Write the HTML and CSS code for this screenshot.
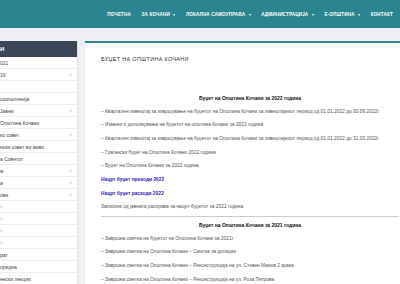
FILE: index.html
```html
<!DOCTYPE html>
<html lang="mk">
<head>
    <meta charset="UTF-8" />
    <meta name="viewport" content="width=device-width, initial-scale=1.0"/>
    <title>Буџет на Општина Кочани</title>
    <link rel="stylesheet" href="styles.css">
</head>
<body>
<header class="topbar">
    <nav class="menu">
        <a href="#">ПОЧЕТНА</a>
        <a href="#">ЗА КОЧАНИ <span class="caret">▾</span></a>
        <a href="#">ЛОКАЛНА САМОУПРАВА <span class="caret">▾</span></a>
        <a href="#">АДМИНИСТРАЦИЈА <span class="caret">▾</span></a>
        <a href="#">Е-ОПШТИНА <span class="caret">▾</span></a>
        <a href="#">КОНТАКТ</a>
    </nav>
</header>

<div class="page">
    <aside class="sidebar">
        <div class="side-head">И</div>
        <ul class="side-list">
            <li>021</li>
            <li>19 <span class="chev">˅</span></li>
            <li></li>
            <li>соопштенија</li>
            <li>Јавни <span class="chev">˅</span></li>
            <li>Општина Кочани</li>
            <li>ко совет <span class="chev">˅</span></li>
            <li>нски совет во живо</li>
            <li>а Советот</li>
            <li>м <span class="chev">˅</span></li>
            <li>а <span class="chev">˅</span></li>
            <li>ове <span class="chev">˅</span></li>
            <li><span class="chev">˅</span></li>
            <li><span class="chev">˅</span></li>
            <li><span class="chev">˅</span></li>
            <li><span class="chev">˅</span></li>
            <li>рат</li>
            <li>оредна</li>
            <li>нески лекции</li>
        </ul>
    </aside>

    <main class="content">
        <h1>БУЏЕТ НА ОПШТИНА КОЧАНИ</h1>

        <h3>Буџет на Општина Кочани за 2022 година</h3>
        <p>– Квартален извештај за извршување на буџетот на Општина Кочани за извештајниот период од 01.01.2022 до 30.06.2022г</p>
        <p>– Измени и дополнувања на буџетот на општина Кочани за 2022 година</p>
        <p>– Квартален извештај за извршување на буџетот на Општина Кочани за извештајниот период од 01.01.2022 до 31.03.2022г</p>
        <p>– Граѓански буџет на Општина Кочани 2022 година</p>
        <p>– Буџет на Општина Кочани за 2022 година</p>
        <p><a href="#">Нацрт буџет приходи 2022</a></p>
        <p><a href="#">Нацрт буџет расходи 2022</a></p>
        <p>Записник од јавната расправа за нацрт-буџетот за 2022 година</p>
        <hr>
        <h3>Буџет на Општина Кочани за 2021 година</h3>
        <p>– Завршна сметка на буџетот на Општина Кочани за 2021г</p>
        <p>– Завршна сметка на Општина Кочани – Сметка за дотации</p>
        <p>– Завршна сметка на Општина Кочани – Реконструкција на ул. Стевен Манов 2 крака</p>
        <p>– Завршна сметка на Општина Кочани – Реконструкција на ул. Роза Петрова</p>
    </main>
</div>
</body>
</html>
```

FILE: styles.css
```css
body {
    margin: 0;
    font-family: "Liberation Sans", Arial, sans-serif;
    background: #eef0f5;
    overflow: hidden;
}
.topbar {
    background: #2b8591;
    height: 28px;
    display: flex;
    align-items: center;
    justify-content: flex-end;
}
.menu {
    display: flex;
    gap: 10.5px;
    padding-right: 7px;
}
.menu a {
    color: white;
    text-decoration: none;
    font-size: 4.6px;
    font-weight: bold;
    letter-spacing: 0.15px;
}
.caret {
    font-size: 4px;
    opacity: 0.8;
    margin-left: 2px;
}
.page {
    display: flex;
    gap: 7px;
    padding-top: 13px;
}
.sidebar {
    width: 77px;
    flex: none;
    background: white;
    border-right: 1px solid #dfe2e8;
}
.side-head {
    background: #3b4659;
    color: white;
    font-size: 6px;
    font-weight: bold;
    height: 16px;
    line-height: 16px;
}
.side-list {
    list-style: none;
    margin: 0;
    padding: 0;
}
.side-list li {
    height: 11px;
    line-height: 13px;
    border-bottom: 1px solid #eceef2;
    font-size: 5px;
    color: #444;
    display: flex;
    justify-content: space-between;
    padding-right: 5px;
}
.chev {
    color: #aaa;
    font-size: 5px;
}
.content {
    width: 298px;
    flex: none;
    background: white;
    border-top: 2px solid #2b8591;
    padding: 13px 16px 0 16px;
    color: #555;
    font-size: 4.85px;
}
.content h1 {
    font-size: 5.5px;
    font-weight: normal;
    color: #333;
    letter-spacing: 0.3px;
    margin: 0 0 33px 0;
}
.content h3 {
    text-align: center;
    font-size: 5px;
    color: #111;
    margin: 0 0 7.5px 0;
}
.content p {
    margin: 0 0 7.7px 0;
    line-height: 6px;
    white-space: nowrap;
}
.content a {
    color: #2e20b8;
    font-weight: bold;
    text-decoration: none;
}
.content hr {
    border: none;
    border-top: 1px solid #ccc;
    margin: -2px 0 5px 0;
}
```
